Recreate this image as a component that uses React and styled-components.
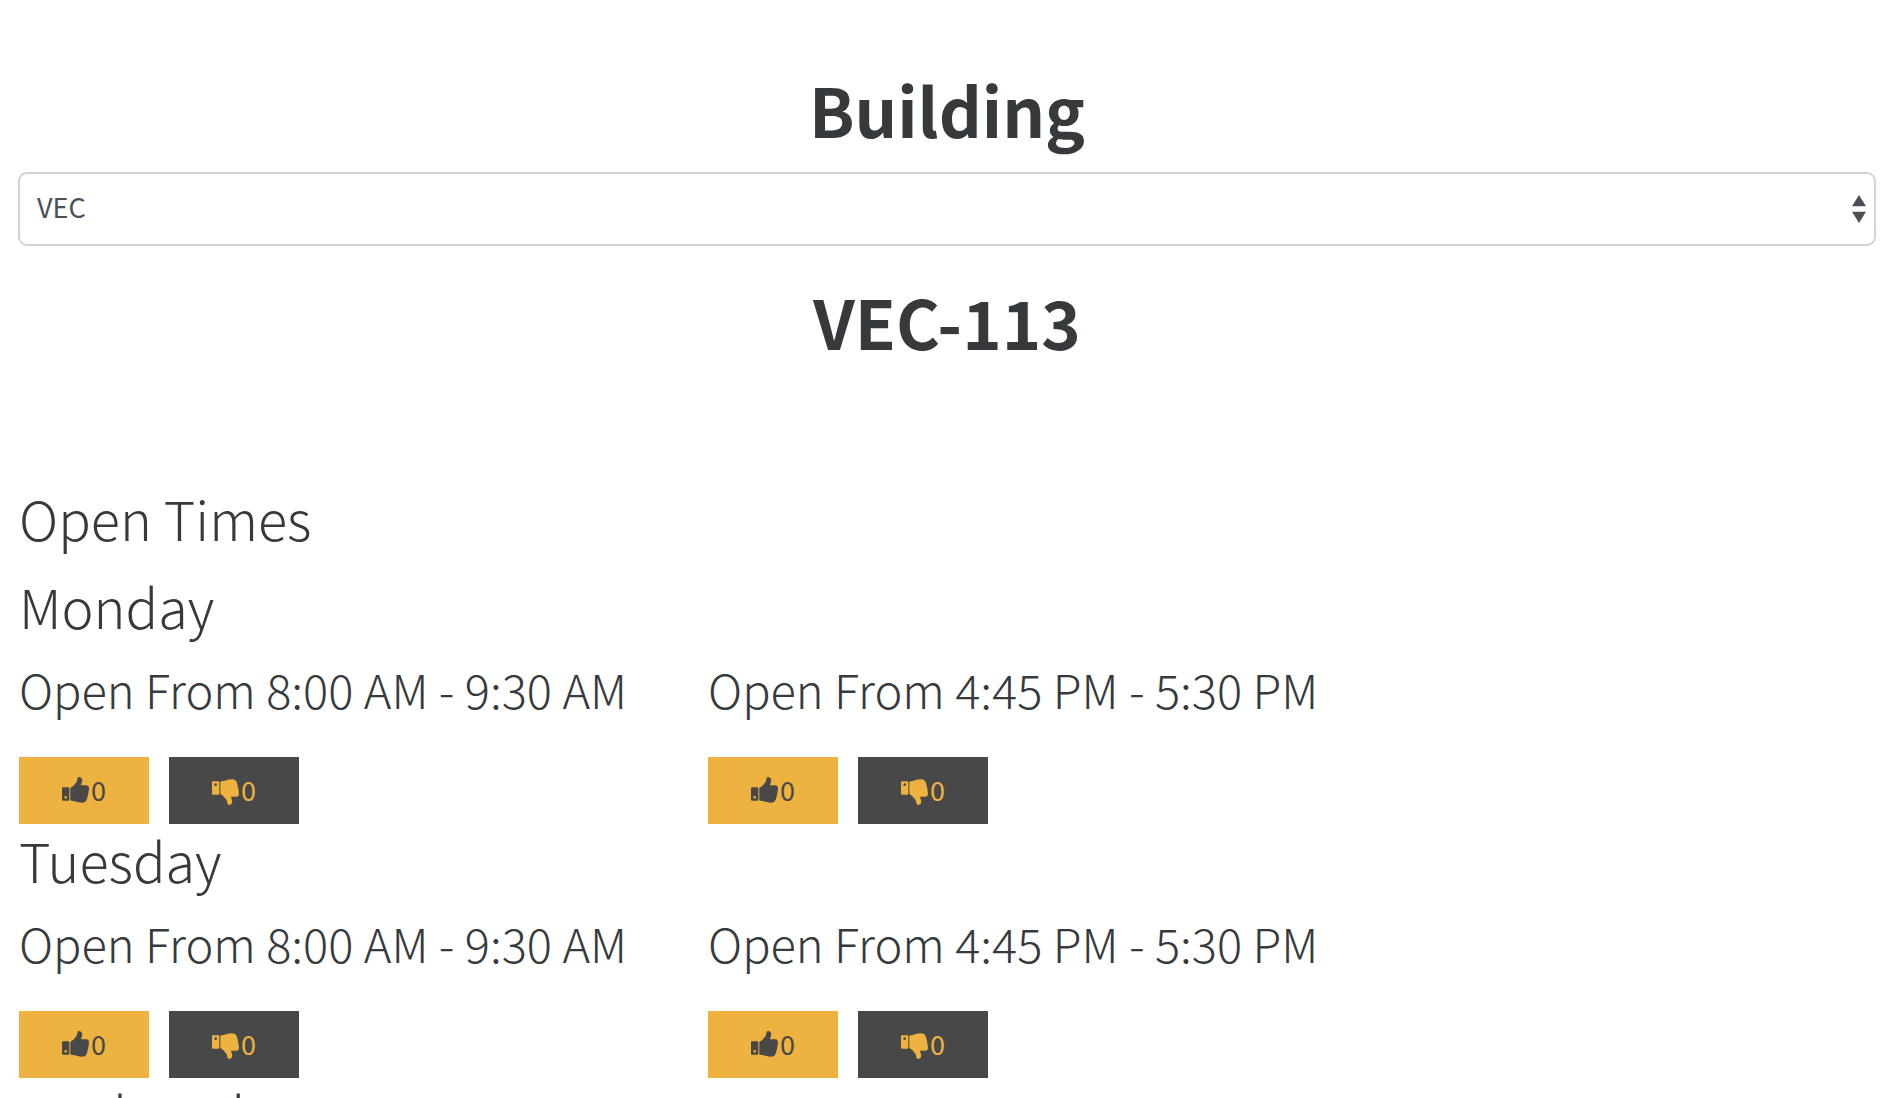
import React, { useState } from "react";
import styled, { createGlobalStyle } from "styled-components";

const GlobalStyle = createGlobalStyle`
  body {
    margin: 0;
    background: #ffffff;
    color: #373a3c;
    font-family: "Noto Sans CJK JP", "Open Sans", sans-serif;
    font-weight: 300;
  }
`;

const Page = styled.main`
  padding: 69px 24px 0 18px;
`;

const Title = styled.h1`
  margin: 0 0 23px;
  font-size: 67px;
  line-height: 80px;
  font-weight: 700;
  text-align: center;
`;

const SelectBox = styled.select`
  display: block;
  width: 100%;
  height: 74px;
  margin-bottom: 35px;
  padding: 0 60px 6px 17px;
  appearance: none;
  border: 2px solid #ced4da;
  border-radius: 9px;
  color: #495057;
  font: 400 27px "Noto Sans CJK JP", "Open Sans", sans-serif;
  background: #ffffff
    url("data:image/svg+xml;charset=utf8,%3Csvg xmlns='http://www.w3.org/2000/svg' viewBox='0 0 4 5' preserveAspectRatio='none'%3E%3Cpath fill='%23495057' d='M2 0L0 2h4zm0 5L0 3h4z'/%3E%3C/svg%3E")
    no-repeat right 8px center / 14px 28px;
`;

const Section = styled.section`
  margin-top: 124px;
  padding-left: 1px;
`;

const Heading = styled.h2`
  margin: 0 0 22px;
  font-size: 54px;
  line-height: 66px;
  font-weight: 300;
`;

const Day = styled.section`
  margin-bottom: 3px;
`;

const Slots = styled.div`
  display: flex;
  flex-wrap: wrap;
  column-gap: 81px;
`;

const SlotTitle = styled.h3`
  margin: 0 0 40px;
  font-size: 47px;
  line-height: 56px;
  font-weight: 300;
`;

const Votes = styled.div`
  display: flex;
  gap: 20px;
`;

const VoteButton = styled.button`
  display: flex;
  align-items: center;
  justify-content: center;
  gap: 2px;
  width: 130px;
  height: 67px;
  padding: 0;
  border: 0;
  background: ${(p) => (p.$down ? "#484848" : "#edb240")};
  color: ${(p) => (p.$down ? "#edb240" : "#484848")};
  font: 400 27px/40px "Noto Sans CJK JP", "Open Sans", sans-serif;
`;

const Count = styled.span`
  padding-bottom: 2px;
`;

function Thumb({ down }) {
  return (
    <svg width="27" height="28" viewBox="0 0 81 84" fill="currentColor" aria-hidden="true">
      <g transform={down ? "translate(0 84) scale(1 -1)" : undefined}>
        <path
          fillRule="evenodd"
          d="M3 31H19Q22 31 22 34V68Q22 71 19 71H3Q0 71 0 68V34Q0 31 3 31ZM11 57A4 4 0 1 0 11 65A4 4 0 1 0 11 57Z"
        />
        <path d="M25 35Q25 32 28 31C34 28 39 21 43 16C46 12 45 8 47 3C48 0 53 -1 57 2C62 6 61 13 59 18C58 21 57 23 57 25H72C78 25 81 29 81 34C81 37 80 39 80 41C80 44 79 46 79 49C78 52 78 55 77 58C76 61 76 64 74 68C72 74 67 77 60 77C51 77 42 74 35 72C31 71 25 72 25 68Z" />
      </g>
    </svg>
  );
}

function Vote({ down }) {
  const [count, setCount] = useState(0);
  return (
    <VoteButton type="button" $down={down} onClick={() => setCount(count + 1)}>
      <Thumb down={down} />
      <Count>{count}</Count>
    </VoteButton>
  );
}

const weekdayTimes = ["8:00 AM - 9:30 AM", "4:45 PM - 5:30 PM"];

const schedule = [
  { day: "Monday", times: weekdayTimes },
  { day: "Tuesday", times: weekdayTimes },
  { day: "Wednesday", times: [] },
];

export default function App() {
  return (
    <>
      <GlobalStyle />
      <Page>
        <Title>
          <label htmlFor="building">Building</label>
        </Title>
        <SelectBox id="building">
          <option>VEC</option>
        </SelectBox>
        <Title>VEC-113</Title>
        <Section>
          <Heading>Open Times</Heading>
          {schedule.map(({ day, times }) => (
            <Day key={day}>
              <Heading>{day}</Heading>
              <Slots>
                {times.map((time) => (
                  <div key={time}>
                    <SlotTitle>Open From {time}</SlotTitle>
                    <Votes>
                      <Vote />
                      <Vote down />
                    </Votes>
                  </div>
                ))}
              </Slots>
            </Day>
          ))}
        </Section>
      </Page>
    </>
  );
}
